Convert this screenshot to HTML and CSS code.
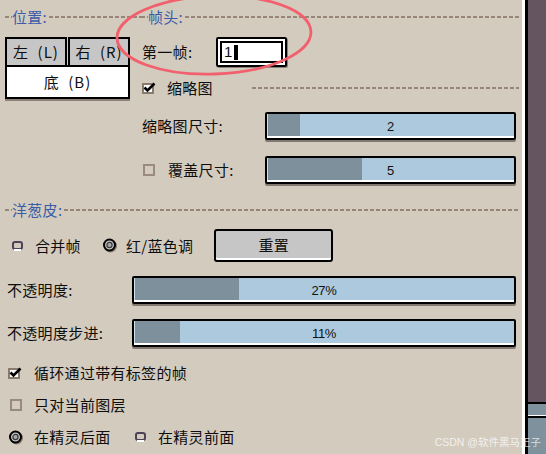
FILE: index.html
```html
<!DOCTYPE html>
<html>
<head>
<meta charset="utf-8">
<title>Timeline</title>
<link rel="stylesheet" href="styles.css">
</head>
<body>
<div class="screen">
  <div class="dialog">
    <div class="top">
      <div class="col-left">
        <div class="sep sep-join"><span class="lead"></span><span class="sep-label">位置:</span><span class="dash"></span></div>
        <div class="seg">
          <div class="btn gray">左&ensp;(L)</div>
          <div class="btn gray">右&ensp;(R)</div>
          <div class="btn white wide">底&ensp;(B)</div>
        </div>
      </div>
      <div class="col-right">
        <div class="sep"><span class="lead"></span><span class="sep-label">帧头:</span><span class="dash"></span></div>
        <div class="row row-first">
          <span class="lbl lbl-first">第一帧:</span>
          <div class="input"><div class="field"><span class="digit">1</span><span class="caret"></span></div></div>
        </div>
        <div class="sep sep-check">
          <svg class="cb-on" width="14" height="12" viewBox="0 0 14 12"><rect x="1" y="2" width="10" height="9" fill="#fff" stroke="#8a7a6e" stroke-width="2"/><path d="M2.5 5.5 L5.5 8.5 L12.5 1.5" stroke="#000" stroke-width="2.6" fill="none"/></svg>
          <span class="sub-label">缩略图</span><span class="dash"></span>
        </div>
        <div class="row row-slider">
          <span class="lbl lbl-r">缩略图尺寸:</span>
          <div class="slider s-short" style="--v:33px"><span class="val">2</span></div>
        </div>
        <div class="row row-slider">
          <svg class="cb-off cb-off-r" width="12" height="12" viewBox="0 0 12 12"><rect x="1" y="1" width="10" height="10" fill="none" stroke="#9a8a7f" stroke-width="2"/></svg>
          <span class="lbl lbl-over">覆盖尺寸:</span>
          <div class="slider s-short" style="--v:95px"><span class="val">5</span></div>
        </div>
      </div>
    </div>

    <div class="sep sep-onion"><span class="lead"></span><span class="sep-label">洋葱皮:</span><span class="dash"></span></div>

    <div class="row row-mode">
      <svg class="radio-off r1" width="11" height="10" viewBox="0 0 11 10"><rect x="1" y="1" width="9" height="7" rx="2" fill="#d3cbbe" stroke="#4d4257" stroke-width="2"/><rect x="2" y="8" width="7" height="2" fill="#fff"/></svg>
      <span class="opt opt-merge">合并帧</span>
      <svg class="radio-on r2" width="16" height="15" viewBox="0 0 16 15"><circle cx="8.5" cy="8" r="6.5" fill="#8a7a6e"/><circle cx="7.5" cy="7" r="5.5" fill="#c2c2c2" stroke="#000" stroke-width="2"/><circle cx="7.5" cy="7" r="2.6" fill="#a8a8a8" stroke="#3a3a3a" stroke-width="1.2"/></svg>
      <span class="opt opt-tint">红/蓝色调</span>
      <div class="reset">重置</div>
    </div>

    <div class="row row-wide row-op">
      <span class="lbl lbl-w">不透明度:</span>
      <div class="slider s-long" style="--v:105px"><span class="val">27%</span></div>
    </div>
    <div class="row row-wide row-step">
      <span class="lbl lbl-w">不透明度步进:</span>
      <div class="slider s-long" style="--v:46px"><span class="val">11%</span></div>
    </div>

    <div class="row row-check row-loop">
      <svg class="cb-on cb-loop" width="14" height="12" viewBox="0 0 14 12"><rect x="1" y="2" width="10" height="9" fill="#fff" stroke="#8a7a6e" stroke-width="2"/><path d="M2.5 5.5 L5.5 8.5 L12.5 1.5" stroke="#000" stroke-width="2.6" fill="none"/></svg>
      <span class="opt">循环通过带有标签的帧</span>
    </div>
    <div class="row row-check row-layer">
      <svg class="cb-off cb-layer" width="12" height="12" viewBox="0 0 12 12"><rect x="1" y="1" width="10" height="10" fill="none" stroke="#9a8a7f" stroke-width="2"/></svg>
      <span class="opt">只对当前图层</span>
    </div>
    <div class="row row-check row-pos">
      <svg class="radio-on r3" width="16" height="15" viewBox="0 0 16 15"><circle cx="8.5" cy="8" r="6.5" fill="#8a7a6e"/><circle cx="7.5" cy="7" r="5.5" fill="#c2c2c2" stroke="#000" stroke-width="2"/><circle cx="7.5" cy="7" r="2.6" fill="#a8a8a8" stroke="#3a3a3a" stroke-width="1.2"/></svg>
      <span class="opt opt-behind">在精灵后面</span>
      <svg class="radio-off r4" width="11" height="10" viewBox="0 0 11 10"><rect x="1" y="1" width="9" height="7" rx="2" fill="#d3cbbe" stroke="#4d4257" stroke-width="2"/><rect x="2" y="8" width="7" height="2" fill="#fff"/></svg>
      <span class="opt">在精灵前面</span>
    </div>
  </div>

  <div class="side">
    <div class="side-in">
      <div class="side-purple"></div>
      <div class="side-blue1"></div>
      <div class="side-blue2"></div>
    </div>
  </div>

  <svg class="annot" width="546" height="454" viewBox="0 0 546 454"><ellipse cx="214" cy="35" rx="97" ry="39" transform="rotate(-2 214 35)" fill="none" stroke="#f2606e" stroke-width="2.8"/></svg>
  <div class="watermark">CSDN @软件黑马王子</div>
</div>
</body>
</html>
```

FILE: styles.css
```css
* { box-sizing: border-box; }

body {
  margin: 0;
  background: #d3cbbe;
  font-family: "Noto Sans CJK SC", "Noto Sans", sans-serif;
  font-size: 15px;
  line-height: 16px;
  color: #0e0e0e;
  letter-spacing: 0.3px;
}

.screen {
  position: relative;
  display: flex;
  width: 546px;
  height: 454px;
  overflow: hidden;
}

.dialog {
  width: 522px;
  padding: 9px 3px 0 5px;
}

/* separators */
.sep {
  display: flex;
  align-items: center;
  height: 16px;
}
.sep-join { margin-right: -9px; }
.lead {
  width: 7px;
  height: 2px;
  background: repeating-linear-gradient(90deg, #978677 0 4px, transparent 4px 6px);
}
.dash {
  flex: 1;
  height: 2px;
  background: repeating-linear-gradient(90deg, #978677 0 4px, transparent 4px 6px);
}
.sep-label {
  color: #3a5ba8;
  padding-right: 2px;
}

/* top two columns */
.top {
  display: grid;
  grid-template-columns: 127px 1fr;
  column-gap: 9px;
}

.seg {
  margin-top: 12px;
  width: 125px;
  display: grid;
  grid-template-columns: 62px 62px;
  column-gap: 1px;
}
.btn {
  border: 2px solid #000;
  display: flex;
  align-items: center;
  justify-content: center;
  letter-spacing: 1px;
  white-space: nowrap;
}
.gray {
  height: 30px;
  background: #c6c6c6;
}
.wide {
  grid-column: 1 / 3;
  margin-top: -2px;
  height: 34px;
  background: #fff;
  box-shadow: 0 2px 0 #8a8078;
}

.row {
  display: flex;
  align-items: center;
}
.lbl { flex: none; }

.row-first {
  margin-top: 12px;
  height: 30px;
}
.lbl-first {
  width: 75px;
  padding-left: 1px;
}
.input {
  width: 71px;
  height: 30px;
  border: 2px solid #000;
  padding: 2px;
  background: #fff;
  border-radius: 2px;
  box-shadow: 1px 1px 0 #8a8078;
}
.field {
  height: 100%;
  border: 2px solid #000;
  background: #fff;
  display: flex;
  align-items: center;
  padding-left: 2px;
  font-family: "Liberation Sans", sans-serif;
  font-size: 15px;
}
.caret {
  width: 4px;
  height: 15px;
  background: #000;
  margin-left: 1px;
}

.sep-check {
  margin-top: 13px;
}
.cb-on { flex: none; display: block; }
.cb-off { flex: none; display: block; }
.sep-check .cb-on { margin-left: 1px; }
.sub-label {
  margin-left: 11px;
  width: 85px;
}

.row-slider {
  margin-top: 16px;
  height: 28px;
}
.lbl-r {
  width: 124px;
  padding-left: 1px;
}
.cb-off-r { margin-left: 2px; }
.lbl-over {
  margin-left: 13px;
  width: 97px;
}

.slider {
  flex: none;
  height: 28px;
  border: 2px solid #000;
  border-radius: 2px;
  background: linear-gradient(90deg, #7e909c var(--v), #adc9dd var(--v));
  box-shadow: 0 2px 0 #837870, inset 0 -2px 0 #fff, inset 1px 0 0 #cfe0ec;
  display: flex;
  align-items: center;
  justify-content: center;
  padding-top: 1px;
}
.s-short { width: 251px; }
.s-long { width: 384px; }
.val {
  font-family: "Liberation Sans", sans-serif;
  font-size: 13px;
  letter-spacing: -0.3px;
  color: #111;
}

.sep-onion { margin-top: 18px; }

.row-mode {
  margin-top: 11px;
  height: 33px;
}
.radio-off, .radio-on { flex: none; display: block; }
.r1 { margin-left: 7px; }
.opt-merge { margin-left: 12px; }
.r2 { margin-left: 21px; }
.opt-tint { margin-left: 8px; }
.reset {
  margin-left: 21px;
  width: 119px;
  height: 33px;
  border: 2px solid #000;
  border-radius: 3px;
  background: #c6c6c6;
  box-shadow: inset 0 -2px 0 #fff;
  display: flex;
  align-items: center;
  justify-content: center;
  padding-bottom: 1px;
}

.row-wide { height: 28px; }
.row-op { margin-top: 14px; }
.row-step { margin-top: 15px; }
.lbl-w {
  width: 127px;
  padding-left: 2px;
}

.row-check { height: 16px; }
.row-loop { margin-top: 18px; }
.row-layer { margin-top: 16px; }
.row-pos { margin-top: 16px; }
.cb-loop { margin-left: 3px; margin-right: 12px; }
.cb-layer { margin-left: 5px; margin-right: 12px; }
.r3 { margin-left: 3px; margin-right: 10px; }
.opt-behind { width: 101px; }
.r4 { margin-right: 12px; }

/* right strip */
.side {
  width: 24px;
  border-left: 3px solid #fff;
  display: flex;
}
.side-in {
  flex: 1;
  border-left: 3px solid #000;
  display: flex;
  flex-direction: column;
}
.side-purple {
  height: 402px;
  background: #655561;
}
.side-blue1 {
  height: 13px;
  border-top: 2px solid #000;
  background: #7e919d;
}
.side-blue2 {
  flex: 1;
  border-top: 1px solid #fff;
  background: #7e919d;
  box-shadow: inset 0 2px 0 #000;
}

/* overlays */
.annot {
  position: absolute;
  left: 0;
  top: 0;
  pointer-events: none;
}
.watermark {
  position: absolute;
  right: 5px;
  bottom: 6px;
  font-family: "Liberation Sans", "Noto Sans CJK SC", sans-serif;
  font-size: 10.5px;
  letter-spacing: 0;
  line-height: 12px;
  color: rgba(255, 255, 255, 0.72);
}
```
